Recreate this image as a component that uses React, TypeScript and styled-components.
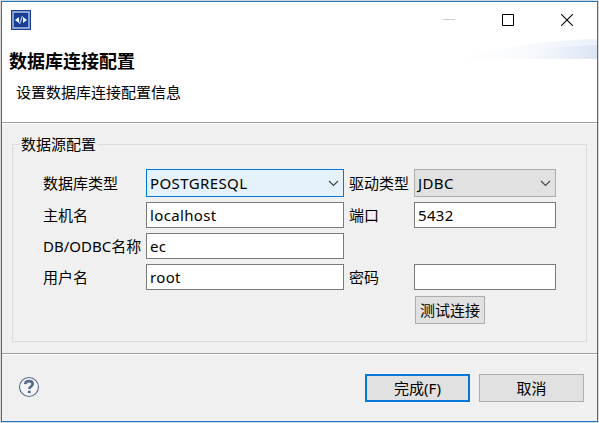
import React from "react";
import styled, { createGlobalStyle } from "styled-components";

const GlobalStyle = createGlobalStyle`
  * { box-sizing: border-box; }
  body { margin: 0; background: #d9d7d5; overflow: hidden; }
  button, input { font: inherit; color: inherit; margin: 0; border-radius: 0; outline: none; }
`;

const Dialog = styled.main`
  width: 597px;
  height: 421px;
  margin: 1px;
  border: 1px solid #1979ca;
  background: #f0f0f0;
  color: #000;
  font: 15px/20px "Noto Sans", "Noto Sans CJK SC", sans-serif;
  display: flex;
  flex-direction: column;
`;

const Header = styled.header`
  position: relative;
  height: 122px;
  flex: none;
  background: #fff;
  border-bottom: 1px solid #fff;
  box-shadow: inset 0 -1px #a0a0a0;
`;

const TitleBar = styled.div`
  position: relative;
  z-index: 1;
  display: flex;
  justify-content: space-between;
  height: 36px;
  padding: 8px 24px 0 9px;
`;

const WindowControls = styled.div`
  display: flex;
  gap: 47px;
  padding-top: 4px;
`;

const Swoosh = styled.svg`
  position: absolute;
  right: 0;
  top: 36px;
`;

const Title = styled.h1`
  position: relative;
  margin: 9px 0 0 7px;
  font: 700 18px/26px "Noto Sans CJK SC", sans-serif;
`;

const Description = styled.p`
  margin: 9px 0 0 14px;
`;

const Content = styled.section`
  height: 230px;
  padding: 20px 10px 0;
  border-bottom: 1px solid #a0a0a0;
`;

const Group = styled.fieldset`
  position: relative;
  height: 198px;
  margin: 0;
  padding: 24px 0 0 30px;
  border: 1px solid #dcdcdc;
  min-width: 0;
`;

const GroupTitle = styled.div`
  position: absolute;
  top: -11px;
  left: 6px;
  padding: 0 2px;
  background: #f0f0f0;
`;

const FormGrid = styled.div`
  display: grid;
  grid-template-columns: 103px 198px 5px 65px 142px;
  grid-template-rows: 28px 26px 26px 26px 28px;
  row-gap: 5px;
`;

const Label = styled.label<{ $column: number; $row: number }>`
  grid-column: ${(p) => p.$column};
  grid-row: ${(p) => p.$row};
  align-self: center;
  white-space: nowrap;
`;

const Input = styled.input<{ $column: number; $row: number }>`
  grid-column: ${(p) => p.$column};
  grid-row: ${(p) => p.$row};
  width: 100%;
  height: 26px;
  border: 1px solid #7a7a7a;
  background: #fff;
  padding: 0 3px;
  letter-spacing: 0.35px;
`;

const Combo = styled.button<{ $column: number; $active?: boolean }>`
  grid-column: ${(p) => p.$column};
  grid-row: 1;
  display: flex;
  align-items: center;
  justify-content: space-between;
  height: 28px;
  padding: 0 4px 0 3px;
  border: 1px solid ${(p) => (p.$active ? "#0078d7" : "#adadad")};
  background: ${(p) => (p.$active ? "#e5f1fb" : "#e1e1e1")};
  letter-spacing: 0.4px;
`;

const Button = styled.button<{ $primary?: boolean }>`
  width: 105px;
  height: 28px;
  padding: 0;
  border: ${(p) => (p.$primary ? "2px solid #0078d7" : "1px solid #adadad")};
  background: #e1e1e1;
  white-space: nowrap;
`;

const TestButton = styled(Button)`
  grid-column: 5;
  grid-row: 5;
  width: 70px;
  margin: 1px 0 0 1px;
`;

const Footer = styled.footer`
  flex: 1;
  display: flex;
  align-items: flex-start;
  justify-content: space-between;
  padding: 19px 13px 0 16px;
  border-top: 1px solid #fff;
`;

const Actions = styled.div`
  display: flex;
  gap: 9px;
`;

const HelpIcon = styled.svg`
  margin-top: 2px;
`;

const Chevron = () => (
  <svg width="11" height="7" viewBox="0 0 11 7" fill="none" stroke="#444" strokeWidth="1.1">
    <path d="M1 1 5.5 5.5 10 1" />
  </svg>
);

const AppIcon = () => (
  <svg width="20" height="20" viewBox="0 0 20 20">
    <path fill="#173f98" d="M0 0h20v20H0z" />
    <path fill="none" stroke="#b4c4e6" strokeWidth="1.4" d="M2 2h16v16H2z" />
    <path fill="#f0f5ff" d="M4 10 8 7v6zM16 10l-4-3v6z" />
    <path stroke="#b8caeb" strokeWidth="1.2" d="m8.6 14 2.8-8" />
  </svg>
);

export default function App() {
  return (
    <>
      <GlobalStyle />
      <Dialog>
        <Header>
          <Swoosh width="140" height="21" viewBox="0 0 140 21">
            <defs>
              <linearGradient id="outer">
                <stop offset="0" stopColor="#fff" />
                <stop offset=".5" stopColor="#f8fafd" />
                <stop offset="1" stopColor="#ebf0fa" />
              </linearGradient>
              <linearGradient id="inner">
                <stop offset=".1" stopColor="#fff" stopOpacity="0" />
                <stop offset="1" stopColor="#dae3f6" />
              </linearGradient>
            </defs>
            <path fill="url(#outer)" d="M0 21C40 10 88 2 140 1v20z" />
            <path fill="url(#inner)" d="M35 21C60 14 92 9 140 7v14z" />
          </Swoosh>
          <TitleBar>
            <AppIcon />
            <WindowControls>
              <svg width="12" height="12"><path fill="#ccc" d="M0 5h12v1H0z" /></svg>
              <svg width="12" height="12"><path fill="none" stroke="#000" d="M.5.5h11v11H.5z" /></svg>
              <svg width="12" height="12"><path stroke="#000" strokeWidth="1.1" d="m.3.3 11.4 11.4m0-11.4L.3 11.7" /></svg>
            </WindowControls>
          </TitleBar>
          <Title>数据库连接配置</Title>
          <Description>设置数据库连接配置信息</Description>
        </Header>
        <Content>
          <Group>
            <GroupTitle>数据源配置</GroupTitle>
            <FormGrid>
              <Label $column={1} $row={1}>数据库类型</Label>
              <Combo $column={2} $active>POSTGRESQL<Chevron /></Combo>
              <Label $column={4} $row={1}>驱动类型</Label>
              <Combo $column={5}>JDBC<Chevron /></Combo>
              <Label $column={1} $row={2}>主机名</Label>
              <Input $column={2} $row={2} defaultValue="localhost" />
              <Label $column={4} $row={2}>端口</Label>
              <Input $column={5} $row={2} defaultValue="5432" />
              <Label $column={1} $row={3}>DB/ODBC名称</Label>
              <Input $column={2} $row={3} defaultValue="ec" />
              <Label $column={1} $row={4}>用户名</Label>
              <Input $column={2} $row={4} defaultValue="root" />
              <Label $column={4} $row={4}>密码</Label>
              <Input $column={5} $row={4} type="password" />
              <TestButton>测试连接</TestButton>
            </FormGrid>
          </Group>
        </Content>
        <Footer>
          <HelpIcon width="22" height="22" viewBox="0 0 22 22" fill="none" stroke="#536b91">
            <circle cx="11" cy="11" r="9.5" fill="#f5f5f6" strokeWidth="1.1" />
            <path strokeWidth="2.7" d="M7.2 8.2C7.4 5.9 9 5.2 11 5.2s3.7 1 3.7 2.9c0 2.4-3.4 2.4-3.4 4.9" />
            <path strokeWidth="2.8" d="M11.3 14.7v2.4" />
          </HelpIcon>
          <Actions>
            <Button $primary>完成(F)</Button>
            <Button>取消</Button>
          </Actions>
        </Footer>
      </Dialog>
    </>
  );
}
